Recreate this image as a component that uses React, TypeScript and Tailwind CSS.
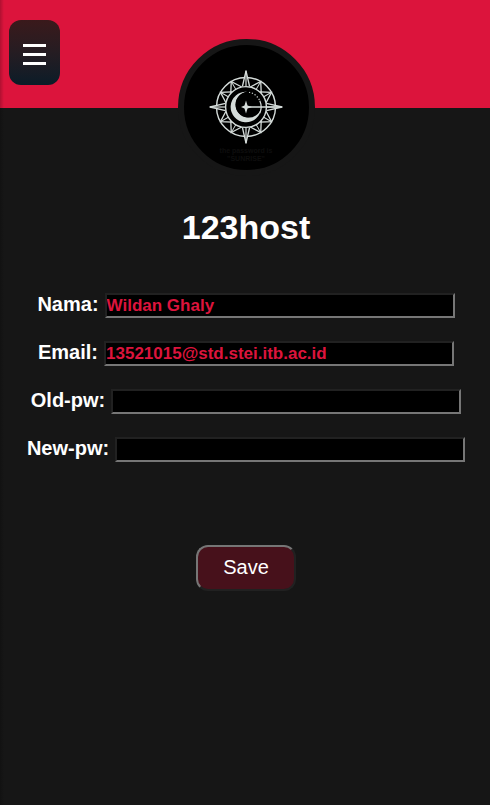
const fields = [
  { id: "nama", label: "Nama:", type: "text", value: "Wildan Ghaly" },
  { id: "email", label: "Email:", type: "email", value: "13521015@std.stei.itb.ac.id" },
  { id: "old-pw", label: "Old-pw:", type: "password", value: "" },
  { id: "new-pw", label: "New-pw:", type: "password", value: "" },
];

const quarterTurns = [0, 90, 180, 270];
const innerRays = [30, 60, 120, 150, 210, 240, 300, 330];

function Emblem() {
  return (
    <svg viewBox="-40 -40 80 80" className="h-20 w-20" fill="none" stroke="#d5dcda" aria-hidden="true">
      <circle r="29.5" strokeWidth="1.4" />
      {innerRays.map((angle) => (
        <g key={angle} transform={`rotate(${angle})`} strokeWidth="1.3">
          <path d="M-6.3 -19.5 L0 -29.5 L6.3 -19.5" />
          <path d="M0 -29.5 V-20.5" strokeWidth="0.9" />
        </g>
      ))}
      {quarterTurns.map((angle) => (
        <g key={angle} transform={`rotate(${angle})`}>
          <path d="M-3.6 -20.5 L0 -36 L3.6 -20.5" fill="#000" strokeWidth="1.3" />
          <path d="M0 -36.5 V-21" strokeWidth="1.2" />
        </g>
      ))}
      <circle r="20.4" fill="#000" strokeWidth="1.4" />
      <path
        d="M1 -15.3 A15.3 15.3 0 1 0 15.2 1 A13 13 0 1 1 1 -15.3 Z"
        fill="#d5dcda"
        stroke="none"
      />
      <circle cx="2.1" cy="-2.3" r="12.6" fill="#000" stroke="none" />
      <path d="M3 -14.8 A15.1 15.1 0 0 1 13.4 -7" strokeWidth="1.1" strokeDasharray="1.2 1.8" />
      <path d="M13.8 -6.2 A15.1 15.1 0 0 1 13.8 6.2" strokeWidth="1.2" />
      <path d="M0 0 H34" strokeWidth="1.3" />
      <path
        d="M0 -6.5 L1.5 -1.5 L6 0 L1.5 1.5 L0 6.5 L-1.5 1.5 L-5 0 L-1.5 -1.5 Z"
        fill="#d5dcda"
        stroke="none"
      />
    </svg>
  );
}

export default function App() {
  return (
    <div className="relative min-h-screen bg-[#161616] font-['Liberation_Sans',Arial,sans-serif] text-white">
      <div className="absolute inset-y-0 left-0 w-1 bg-linear-to-r from-black/20 to-transparent" />
      <header className="h-27 bg-[#dc143c] px-[9px] pt-5">
        <button
          type="button"
          aria-label="Menu"
          className="flex h-[65px] w-[51px] items-center justify-center rounded-xl bg-linear-to-b from-[#3a191b] to-[#0a1c28]"
        >
          <svg viewBox="0 0 23 21" className="mt-1 h-[21px] w-[23px]" fill="white" aria-hidden="true">
            <path d="M0 0H23V3H0Z M0 9H23V12H0Z M0 18H23V21H0Z" />
          </svg>
        </button>
      </header>
      <main className="relative -mt-[69px] flex flex-col items-center pl-[2px]">
        <div className="flex h-[137px] w-[137px] flex-col items-center rounded-full border-6 border-[#161616] bg-black pt-[22px]">
          <Emblem />
          <p className="text-center text-[7px] leading-2 font-bold text-[#0e0e0e]">
            the password is
            <br />
            "SUNRISE"
          </p>
        </div>
        <h1 className="mt-[31px] text-[34px] leading-10 font-bold">123host</h1>
        <form className="flex w-full flex-col items-center" onSubmit={(event) => event.preventDefault()}>
          <div className="mt-[46px] flex w-full flex-col items-center gap-[23px]">
            {fields.map((field) => (
              <div key={field.id} className="flex max-w-full items-start gap-[6px]">
                <label htmlFor={field.id} className="text-[20px] leading-[23px] font-bold">
                  {field.label}
                </label>
                <input
                  id={field.id}
                  type={field.type}
                  defaultValue={field.value}
                  className="h-[25px] w-[350px] min-w-0 border-2 border-t-[#212121] border-r-[#767676] border-b-[#767676] border-l-[#212121] bg-black text-[17px] leading-5 font-bold text-[#dc143c]"
                />
              </div>
            ))}
          </div>
          <button
            type="submit"
            className="mt-[83px] flex h-[46px] w-[100px] justify-center rounded-xl border-2 border-t-[#767676] border-r-[#212121] border-b-[#212121] border-l-[#767676] bg-[#47111b] pt-2 text-[20px] leading-6"
          >
            Save
          </button>
        </form>
      </main>
    </div>
  );
}
